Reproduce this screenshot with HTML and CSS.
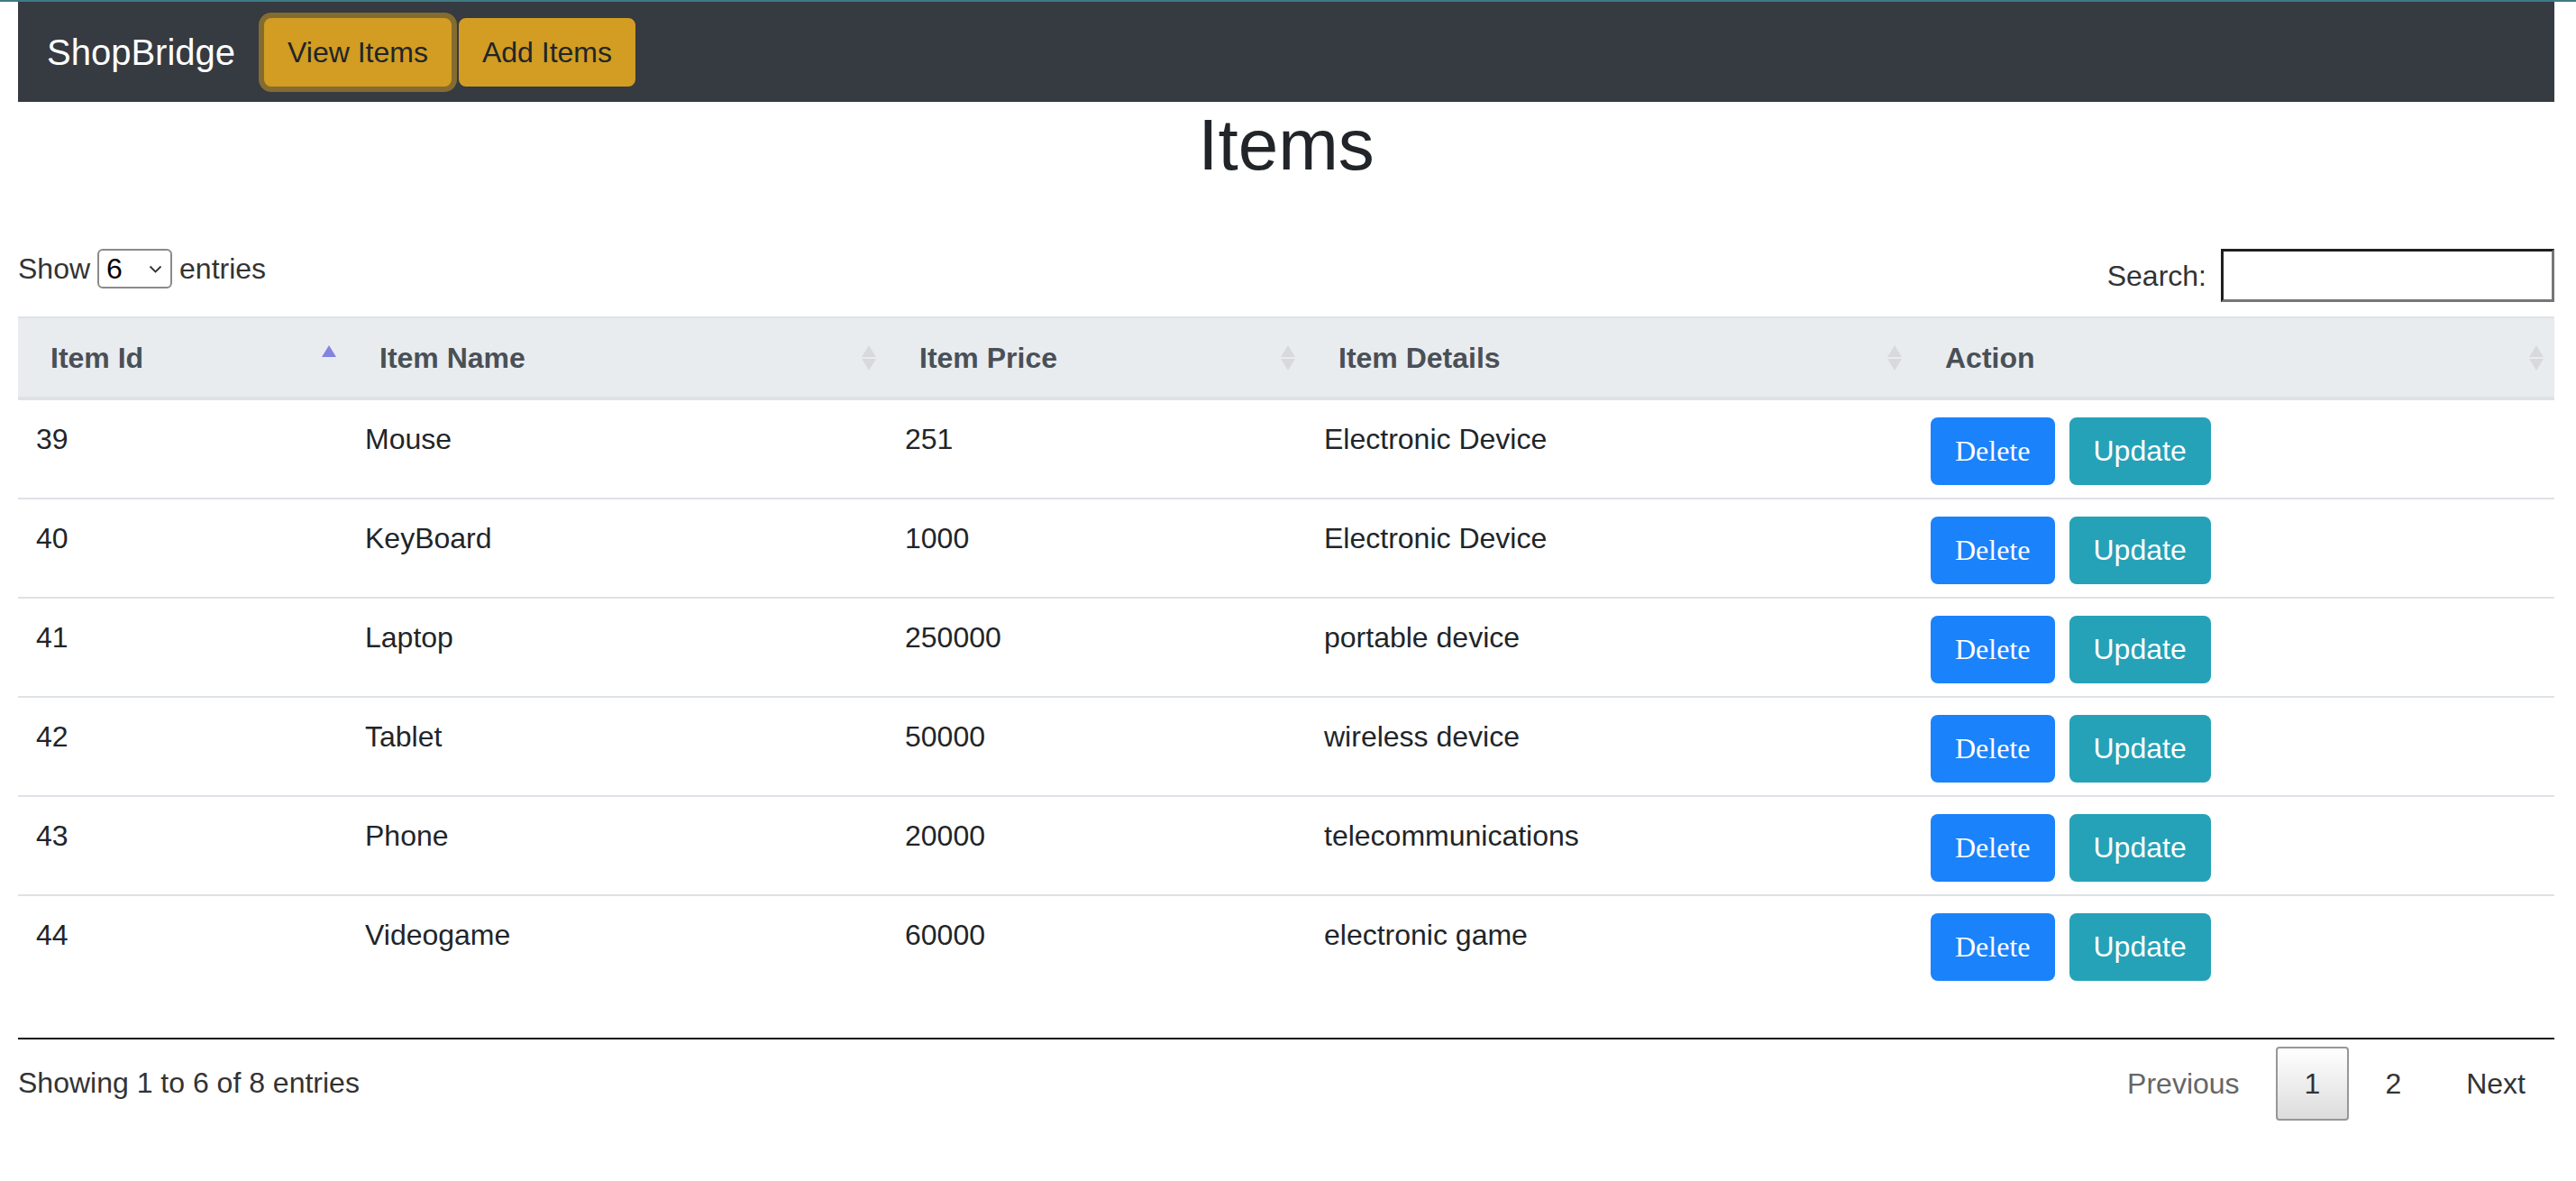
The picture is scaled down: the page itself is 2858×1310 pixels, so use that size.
FILE: index.html
```html
<!DOCTYPE html>
<html lang="en">
<head>
<meta charset="utf-8">
<title>ShopBridge - Items</title>
<link rel="stylesheet" href="styles.css">
</head>
<body>
<div class="topline"></div>
<div class="page">
  <nav class="navbar">
    <span class="brand">ShopBridge</span>
    <button class="nav-btn is-active">View Items</button>
    <button class="nav-btn">Add Items</button>
  </nav>

  <h1 class="title">Items</h1>

  <div class="toolbar">
    <div class="length">
      <span>Show</span>
      <span class="select"><span>6</span><svg class="chev" width="15" height="9" viewBox="0 0 15 9"><polyline points="1.5,1.5 7.5,7.5 13.5,1.5" fill="none" stroke="#333" stroke-width="1.8"/></svg></span>
      <span>entries</span>
    </div>
    <label class="search">
      <span>Search:</span>
      <input class="search-input" type="text">
    </label>
  </div>

  <div class="table-wrap">
    <table class="data">
      <colgroup>
        <col class="col-id">
        <col class="col-name">
        <col class="col-price">
        <col class="col-details">
        <col class="col-action">
      </colgroup>
      <thead>
        <tr>
          <th>Item Id<svg class="sort" width="16" height="28" viewBox="0 0 16 28"><polygon points="8,0 16,13 0,13" fill="#8383e3"/></svg></th>
          <th>Item Name<svg class="sort" width="16" height="28" viewBox="0 0 16 28"><polygon points="8,0 16,13 0,13" fill="#d8d9db"/><polygon points="0,15 16,15 8,28" fill="#d8d9db"/></svg></th>
          <th>Item Price<svg class="sort" width="16" height="28" viewBox="0 0 16 28"><polygon points="8,0 16,13 0,13" fill="#d8d9db"/><polygon points="0,15 16,15 8,28" fill="#d8d9db"/></svg></th>
          <th>Item Details<svg class="sort" width="16" height="28" viewBox="0 0 16 28"><polygon points="8,0 16,13 0,13" fill="#d8d9db"/><polygon points="0,15 16,15 8,28" fill="#d8d9db"/></svg></th>
          <th>Action<svg class="sort" width="16" height="28" viewBox="0 0 16 28"><polygon points="8,0 16,13 0,13" fill="#d8d9db"/><polygon points="0,15 16,15 8,28" fill="#d8d9db"/></svg></th>
        </tr>
      </thead>
      <tbody>
        <tr>
          <td>39</td><td>Mouse</td><td>251</td><td>Electronic Device</td>
          <td><div class="actions"><button class="btn-delete">Delete</button><button class="btn-update">Update</button></div></td>
        </tr>
        <tr>
          <td>40</td><td>KeyBoard</td><td>1000</td><td>Electronic Device</td>
          <td><div class="actions"><button class="btn-delete">Delete</button><button class="btn-update">Update</button></div></td>
        </tr>
        <tr>
          <td>41</td><td>Laptop</td><td>250000</td><td>portable device</td>
          <td><div class="actions"><button class="btn-delete">Delete</button><button class="btn-update">Update</button></div></td>
        </tr>
        <tr>
          <td>42</td><td>Tablet</td><td>50000</td><td>wireless device</td>
          <td><div class="actions"><button class="btn-delete">Delete</button><button class="btn-update">Update</button></div></td>
        </tr>
        <tr>
          <td>43</td><td>Phone</td><td>20000</td><td>telecommunications</td>
          <td><div class="actions"><button class="btn-delete">Delete</button><button class="btn-update">Update</button></div></td>
        </tr>
        <tr>
          <td>44</td><td>Videogame</td><td>60000</td><td>electronic game</td>
          <td><div class="actions"><button class="btn-delete">Delete</button><button class="btn-update">Update</button></div></td>
        </tr>
      </tbody>
    </table>
  </div>

  <div class="footer">
    <div class="info">Showing 1 to 6 of 8 entries</div>
    <div class="paginate">
      <span class="pg disabled">Previous</span>
      <span class="pg current">1</span>
      <span class="pg">2</span>
      <span class="pg">Next</span>
    </div>
  </div>
</div>
</body>
</html>
```

FILE: styles.css
```css
body {
  margin: 0;
  font-family: "Liberation Sans", Arial, sans-serif;
  font-size: 32px;
  color: #212529;
  background: #fff;
}

.topline {
  height: 2px;
  background: #3e7c85;
}

.page {
  padding: 0 24px 0 20px;
}

/* navbar */
.navbar {
  display: flex;
  align-items: center;
  height: 111px;
  padding: 0 32px;
  background: #363a41;
}

.brand {
  font-size: 40px;
  line-height: 60px;
  color: #fff;
  margin-right: 32px;
}

.nav-btn {
  font-family: inherit;
  font-size: 32px;
  line-height: 48px;
  padding: 12px 24px;
  border: 2px solid #d29d22;
  background: #d29d22;
  color: #212529;
  border-radius: 8px;
  margin-right: 8px;
}

.nav-btn.is-active {
  box-shadow: 0 0 0 6px rgba(210, 157, 34, 0.5);
}

/* title */
.title {
  margin: 0 0 16px;
  font-size: 80px;
  line-height: 96px;
  font-weight: 400;
  text-align: center;
  color: #212529;
}

/* toolbar */
.toolbar {
  display: flex;
  justify-content: space-between;
  align-items: flex-start;
  margin-top: 65px;
  color: #333;
}

.length {
  display: flex;
  align-items: center;
  gap: 8px;
  height: 48px;
  line-height: 48px;
}

.select {
  display: flex;
  align-items: center;
  justify-content: space-between;
  box-sizing: border-box;
  width: 83px;
  height: 44px;
  padding: 0 9px 0 8px;
  border: 2px solid #8a8a8a;
  border-radius: 6px;
  color: #000;
}

.search {
  display: flex;
  align-items: center;
  gap: 16px;
  margin-top: 2px;
  line-height: 48px;
}

.search-input {
  box-sizing: border-box;
  width: 370px;
  height: 59px;
  border: 3px solid;
  border-color: #1f1f1f #767676 #767676 #1f1f1f;
  padding: 5px 10px;
  font: inherit;
  background: #fff;
}

/* table */
.table-wrap {
  margin-top: 16px;
  padding-bottom: 49px;
  border-bottom: 2px solid #111;
}

.data {
  width: 100%;
  border-collapse: separate;
  border-spacing: 0;
  table-layout: fixed;
}

.col-id { width: 365px; }
.col-name { width: 599px; }
.col-price { width: 465px; }
.col-details { width: 673px; }
.col-action { width: 712px; }

.data th {
  position: relative;
  background: #e9ecef;
  border-top: 2px solid #dee2e6;
  border-bottom: 2px solid #dee2e6;
  padding: 20px 36px 19px 36px;
  line-height: 48px;
  color: #495057;
  font-weight: 700;
  text-align: left;
  white-space: nowrap;
}

.sort {
  position: absolute;
  right: 12px;
  top: 50%;
  transform: translateY(-50%);
}

.data td {
  padding: 19px 20px 14px;
  line-height: 48px;
  vertical-align: top;
  border-top: 2px solid #dee2e6;
  color: #212529;
}

.actions {
  display: flex;
  gap: 16px;
}

.btn-delete {
  font-family: "Liberation Serif", "Times New Roman", serif;
  font-size: 32px;
  color: #fff;
  background: #1a82fb;
  border: 0;
  border-radius: 8px;
  height: 75px;
  padding: 0 27px;
}

.btn-update {
  font-family: inherit;
  font-size: 32px;
  color: #fff;
  background: #25a2b8;
  border: 2px solid #25a2b8;
  border-radius: 8px;
  height: 75px;
  padding: 0 25px;
}

/* footer */
.footer {
  display: flex;
  justify-content: space-between;
  align-items: flex-start;
  color: #333;
}

.info {
  padding-top: 24px;
  line-height: 48px;
}

.paginate {
  display: flex;
  gap: 8px;
  padding-top: 8px;
}

.pg {
  padding: 15px 30px;
  line-height: 48px;
  border: 2px solid transparent;
  border-radius: 4px;
  color: #333;
}

.pg.disabled {
  color: #666;
}

.pg.current {
  border-color: #979797;
  background: linear-gradient(#ffffff, #dcdcdc);
}
```
